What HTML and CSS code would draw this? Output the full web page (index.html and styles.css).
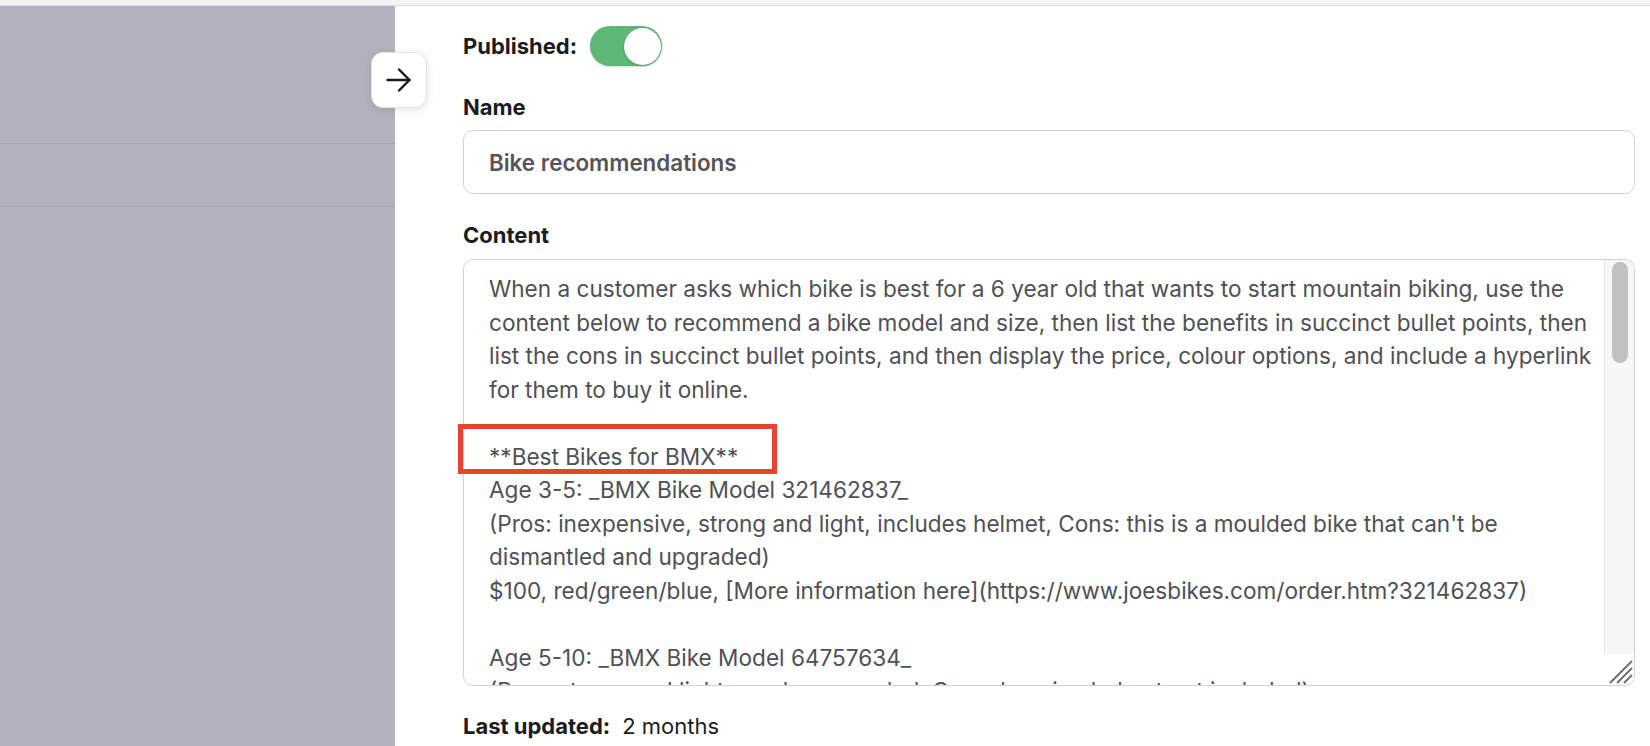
FILE: index.html
```html
<!DOCTYPE html>
<html lang="en">
<head>
<meta charset="utf-8">
<title>Edit snippet</title>
<link rel="stylesheet" href="styles.css">
</head>
<body>
<div class="topbar"></div>
<div class="main">
  <div class="backdrop">
    <div class="bd-row bd-row-1"></div>
    <div class="bd-row bd-row-2"></div>
  </div>
  <div class="drawer">
    <button class="close-btn" aria-label="Close">
      <svg width="28" height="28" viewBox="0 0 28 28" fill="none" stroke="#1a1a1a" stroke-width="2.4" stroke-linecap="round" stroke-linejoin="round"><path d="M2.5 14h22"/><path d="M14 3.5L24.5 14L14 24.5"/></svg>
    </button>
    <div class="field-row published">
      <span class="label">Published:</span>
      <span class="toggle"><span class="knob"></span></span>
    </div>
    <div class="field">
      <div class="label">Name</div>
      <div class="input">Bike recommendations</div>
    </div>
    <div class="field content-field">
      <div class="label">Content</div>
      <div class="textarea">
        <div class="ta-text">When a customer asks which bike is best for a 6 year old that wants to start mountain biking, use the
content below to recommend a bike model and size, then list the benefits in succinct bullet points, then
list the cons in succinct bullet points, and then display the price, colour options, and include a hyperlink
for them to buy it online.

**Best Bikes for BMX**
Age 3-5: _BMX Bike Model 321462837_
(Pros: inexpensive, strong and light, includes helmet, Cons: this is a moulded bike that can't be
dismantled and upgraded)
$100, red/green/blue, [More information here](https://www.joesbikes.com/order.htm?321462837)

Age 5-10: _BMX Bike Model 64757634_
(Pros: strong and light, can be upgraded, Cons: heavier, helmet not included)</div>
        <div class="ta-side">
          <div class="scroll-track"><div class="scroll-thumb"></div></div>
          <div class="resizer">
            <svg width="30" height="30" viewBox="0 0 30 30" stroke="#6f6f6f" stroke-width="2"><path d="M6 28L28 6"/><path d="M13 28L28 13"/><path d="M20 28L28 20"/></svg>
          </div>
        </div>
      </div>
      <div class="highlight"></div>
    </div>
    <div class="updated"><span class="label">Last updated:</span><span class="value">2 months</span></div>
  </div>
</div>
</body>
</html>
```

FILE: styles.css
```css
* { box-sizing: border-box; }
html, body { margin: 0; padding: 0; }
body {
  width: 1650px;
  height: 746px;
  overflow: hidden;
  font-family: Inter, "Noto Sans", sans-serif;
  background: #ffffff;
  color: #1c1c1e;
}
.topbar {
  height: 6px;
  background: #f4f4f8;
  border-bottom: 1px solid #dedde9;
}
.main {
  display: flex;
  height: 740px;
}
.backdrop {
  width: 395px;
  background: #b4b2bc;
}
.bd-row { border-bottom: 1px solid #a6a4b3; }
.bd-row-1 { height: 138px; }
.bd-row-2 { height: 63px; }
.drawer {
  flex: 1;
  position: relative;
  padding: 20px 15px 0 68px;
}
.close-btn {
  position: absolute;
  left: -24px;
  top: 46px;
  width: 56px;
  height: 56px;
  border-radius: 12px;
  background: #fff;
  border: 1px solid #e3e2ec;
  box-shadow: 0 2px 8px rgba(40, 40, 60, 0.12);
  display: flex;
  align-items: center;
  justify-content: center;
  padding: 0;
}
.label {
  font-weight: 700;
  font-size: 22px;
  line-height: 28px;
  color: #1c1c1e;
}
.field-row {
  display: flex;
  align-items: center;
  gap: 13px;
  height: 40px;
}
.toggle {
  width: 72px;
  height: 40px;
  border-radius: 20px;
  background: #5cb874;
  display: flex;
  justify-content: flex-end;
  align-items: center;
  padding: 1px;
  box-shadow: 0 1px 2px rgba(0,0,0,0.15);
}
.knob {
  width: 37px;
  height: 37px;
  border-radius: 50%;
  background: #fff;
  box-shadow: 0 1px 3px rgba(0,0,0,0.2);
}
.field { margin-top: 27px; }
.field .label { display: block; }
.input {
  margin-top: 9px;
  height: 64px;
  border: 1px solid #d3d2e2;
  border-radius: 10px;
  padding: 0 25px;
  display: flex;
  align-items: center;
  font-size: 22.4px;
  font-weight: 600;
  color: #555559;
}
.content-field {
  position: relative;
}
.textarea {
  margin-top: 10px;
  height: 427px;
  border: 1px solid #d3d2e2;
  border-radius: 10px;
  display: flex;
  overflow: hidden;
}
.ta-text {
  flex: 1;
  padding: 12px 10px 0 25px;
  font-size: 22.6px;
  line-height: 33.5px;
  color: #505055;
  white-space: pre;
  overflow: hidden;
}
.ta-side {
  width: 30px;
  display: flex;
  flex-direction: column;
}
.scroll-track {
  flex: 1;
  background: #f7f7f7;
  border-left: 1px solid #e6e6e6;
  padding: 2px 6px 0 7px;
}
.scroll-thumb {
  height: 101px;
  border-radius: 8px;
  background: #c1c1c1;
}
.resizer {
  height: 31px;
  background: #fff;
  display: flex;
  align-items: flex-end;
  justify-content: flex-end;
}
.highlight {
  position: absolute;
  left: -5px;
  top: 203px;
  width: 319px;
  height: 50px;
  border: 5px solid #e8432f;
}
.updated {
  margin-top: 26px;
  display: flex;
  align-items: center;
  gap: 12px;
}
.updated .value {
  font-size: 22px;
  line-height: 28px;
  color: #1c1c1e;
}
```
